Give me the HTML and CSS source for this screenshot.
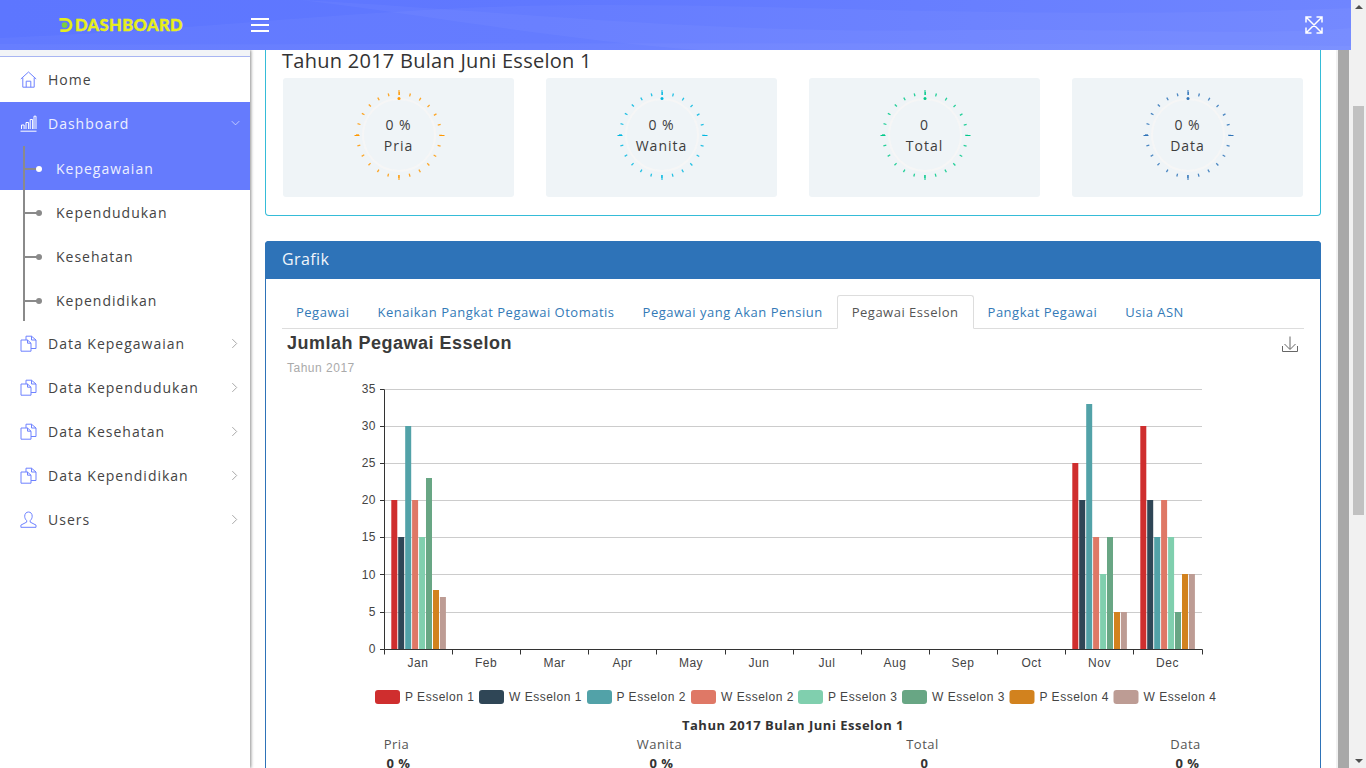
FILE: index.html
```html
<!DOCTYPE html>
<html lang="en">
<head>
    <meta charset="UTF-8">
    <meta name="viewport" content="width=device-width, initial-scale=1.0">
    <title>Dashboard Kepegawaian</title>
    <link rel="stylesheet" href="styles.css">
</head>
<body>
    <svg class="defs" width="0" height="0">
        <symbol id="i-home" viewBox="0 0 17 17"><path d="M.8 8 8.5 1l7.7 7M2.8 6.6v9.6h11.4V6.6M6.2 16.2v-6h4.6v6"/></symbol>
        <symbol id="i-bars" viewBox="0 0 17 17"><path d="M.5 16.2h16M1.5 14V10h2.6v4M6 14V7.5h2.6V14M10.2 14V4.5h2.4V14M14 14V1.2h2V14"/></symbol>
        <symbol id="i-docs" viewBox="0 0 17 17"><path d="M1 5h6.5L11 8.2v8H1zM7.5 5v3.200H11M6 5V1.200h5.500L16 5v8.500h-5M11.500 1.200V5H16"/></symbol>
        <symbol id="i-user" viewBox="0 0 17 17"><path d="M8.500 1c2.200 0 3.700 1.700 3.700 4.200 0 2-1 3.600-2 4.400v1.500l5.800 3v2.200H.9v-2.200l5.800-3V9.600c-1-.8-2-2.400-2-4.400C4.700 2.700 6.300 1 8.500 1z"/></symbol>
        <symbol id="i-right" viewBox="0 0 8 12"><path d="M1.500 1 6.500 6l-5 5"/></symbol>
        <symbol id="i-down" viewBox="0 0 12 8"><path d="M1 1.500 6 6.500l5-5"/></symbol>
        <symbol id="gauge" viewBox="0 0 100 100">
            <circle class="gauge-ring" cx="50" cy="50" r="36"/>
            <circle class="gauge-minor" cx="50" cy="50" r="41.500" stroke-dasharray="1.300 9.565" stroke-dashoffset=".65"/>
            <path class="gauge-major" d="M50 5v5M50 90v5M5.500 50.500h5M90.500 50.500h5"/>
            <circle class="gauge-dot" cx="50" cy="13.500" r="1.500"/>
        </symbol>
    </svg>

    <div class="page">
        <div class="window">
            <header class="topbar">
                <svg class="topbar-waves" viewBox="0 0 1351 50" preserveAspectRatio="none">
                    <path d="M0 38C200 30 330 12 520 6 760 0 980 22 1351 8V50H0z"/>
                    <path d="M300 0C520 12 700 34 960 30 1130 28 1260 36 1351 28V50H700C560 40 420 14 300 0z"/>
                    <path d="M0 44C300 46 700 40 1351 46V50H0z"/>
                </svg>
                <div class="brand">
                    <svg class="brand-mark" viewBox="0 0 16 16">
                        <path class="brand-arc" d="M1.500 2H8a6 6 0 0 1 0 12H2.500"/>
                        <circle class="brand-dot" cx="7" cy="8" r="3"/>
                    </svg>
                    <span class="brand-name">DASHBOARD</span>
                </div>
                <button class="menu-toggle" type="button" aria-label="Menu">
                    <span></span><span></span><span></span>
                </button>
                <svg class="fullscreen" viewBox="0 0 18 18"><path d="M1 1l16 16M17 1 1 17M1 6.500V1h5.500M11.500 1H17v5.500M1 11.500V17h5.500M11.500 17H17v-5.500"/></svg>
            </header>

            <div class="main">
                <aside class="sidebar">
                    <div class="sidebar-top"></div>
                    <nav class="side-nav">
                        <a class="nav-item"><svg class="nav-icon"><use href="#i-home"/></svg>Home</a>
                        <a class="nav-item active"><svg class="nav-icon"><use href="#i-bars"/></svg>Dashboard<svg class="nav-caret down"><use href="#i-down"/></svg></a>
                        <div class="sub-nav">
                            <a class="sub-item active">Kepegawaian</a>
                            <a class="sub-item">Kependudukan</a>
                            <a class="sub-item">Kesehatan</a>
                            <a class="sub-item">Kependidikan</a>
                        </div>
                        <a class="nav-item"><svg class="nav-icon"><use href="#i-docs"/></svg>Data Kepegawaian<svg class="nav-caret"><use href="#i-right"/></svg></a>
                        <a class="nav-item"><svg class="nav-icon"><use href="#i-docs"/></svg>Data Kependudukan<svg class="nav-caret"><use href="#i-right"/></svg></a>
                        <a class="nav-item"><svg class="nav-icon"><use href="#i-docs"/></svg>Data Kesehatan<svg class="nav-caret"><use href="#i-right"/></svg></a>
                        <a class="nav-item"><svg class="nav-icon"><use href="#i-docs"/></svg>Data Kependidikan<svg class="nav-caret"><use href="#i-right"/></svg></a>
                        <a class="nav-item"><svg class="nav-icon"><use href="#i-user"/></svg>Users<svg class="nav-caret"><use href="#i-right"/></svg></a>
                    </nav>
                </aside>

                <main class="content">
                    <section class="card card-summary">
                        <h2 class="summary-title">Tahun 2017 Bulan Juni Esselon 1</h2>
                        <div class="stat-grid">
                            <div class="stat-box">
                                <div class="gauge gauge-orange">
                                    <svg class="gauge-svg"><use href="#gauge"/></svg>
                                    <div class="gauge-text">0 %<br>Pria</div>
                                </div>
                            </div>
                            <div class="stat-box">
                                <div class="gauge gauge-cyan">
                                    <svg class="gauge-svg"><use href="#gauge"/></svg>
                                    <div class="gauge-text">0 %<br>Wanita</div>
                                </div>
                            </div>
                            <div class="stat-box">
                                <div class="gauge gauge-green">
                                    <svg class="gauge-svg"><use href="#gauge"/></svg>
                                    <div class="gauge-text">0<br>Total</div>
                                </div>
                            </div>
                            <div class="stat-box">
                                <div class="gauge gauge-blue">
                                    <svg class="gauge-svg"><use href="#gauge"/></svg>
                                    <div class="gauge-text">0 %<br>Data</div>
                                </div>
                            </div>
                        </div>
                    </section>

                    <section class="card card-chart">
                        <h3 class="card-head">Grafik</h3>
                        <div class="card-body">
                            <ul class="tabs">
                                <li class="tab">Pegawai</li>
                                <li class="tab">Kenaikan Pangkat Pegawai Otomatis</li>
                                <li class="tab">Pegawai yang Akan Pensiun</li>
                                <li class="tab active">Pegawai Esselon</li>
                                <li class="tab">Pangkat Pegawai</li>
                                <li class="tab">Usia ASN</li>
                            </ul>

                            <svg class="chart" viewBox="282 329 1022 381">
                                <text class="chart-title" x="287" y="349">Jumlah Pegawai Esselon</text>
                                <text class="chart-sub" x="287" y="372">Tahun 2017</text>
                                <path class="chart-save" d="M1290 336.500v12.500M1284.500 344l5.500 5.500 5.500-5.500M1282.500 346v5.500h15V346"/>

                                <path class="grid-line" d="M385 389.500H1202M385 426.500H1202M385 463.500H1202M385 500.500H1202M385 537.500H1202M385 574.500H1202M385 612.500H1202"/>
                                <path class="axis-line" d="M380 389.500h4.500V649.500H1202.500M380 426.500h4.500M380 463.500h4.500M380 500.500h4.500M380 537.500h4.500M380 574.500h4.500M380 612.500h4.500M380 649.500h4.500M384.500 649.500v5M452.500 649.500v5M520.500 649.500v5M588.500 649.500v5M656.500 649.500v5M725.500 649.500v5M793.500 649.500v5M861.500 649.500v5M929.500 649.500v5M997.500 649.500v5M1065.500 649.500v5M1133.500 649.500v5M1202.500 649.500v5"/>

                                <g class="axis-y">
                                    <text x="376" y="393">35</text>
                                    <text x="376" y="430">30</text>
                                    <text x="376" y="467">25</text>
                                    <text x="376" y="504">20</text>
                                    <text x="376" y="541">15</text>
                                    <text x="376" y="579">10</text>
                                    <text x="376" y="616">5</text>
                                    <text x="376" y="653">0</text>
                                </g>
                                <g class="axis-x">
                                    <text x="418" y="667">Jan</text>
                                    <text x="486" y="667">Feb</text>
                                    <text x="554.500" y="667">Mar</text>
                                    <text x="622.500" y="667">Apr</text>
                                    <text x="691" y="667">May</text>
                                    <text x="759" y="667">Jun</text>
                                    <text x="827" y="667">Jul</text>
                                    <text x="895" y="667">Aug</text>
                                    <text x="963" y="667">Sep</text>
                                    <text x="1031.500" y="667">Oct</text>
                                    <text x="1099.500" y="667">Nov</text>
                                    <text x="1167.500" y="667">Dec</text>
                                </g>

                                <g>
                                    <rect class="s1" x="391.300" y="500" width="6" height="149"/>
                                    <rect class="s2" x="398.200" y="537" width="6" height="112"/>
                                    <rect class="s3" x="405.200" y="426" width="6" height="223"/>
                                    <rect class="s4" x="412.100" y="500" width="6" height="149"/>
                                    <rect class="s5" x="419.100" y="537" width="6" height="112"/>
                                    <rect class="s6" x="426" y="478" width="6" height="171"/>
                                    <rect class="s7" x="433" y="590" width="6" height="59"/>
                                    <rect class="s8" x="439.900" y="597" width="6" height="52"/>
                                </g>
                                <g>
                                    <rect class="s1" x="1072.300" y="463" width="6" height="186"/>
                                    <rect class="s2" x="1079.200" y="500" width="6" height="149"/>
                                    <rect class="s3" x="1086.200" y="404" width="6" height="245"/>
                                    <rect class="s4" x="1093.100" y="537" width="6" height="112"/>
                                    <rect class="s5" x="1100.100" y="574" width="6" height="75"/>
                                    <rect class="s6" x="1107" y="537" width="6" height="112"/>
                                    <rect class="s7" x="1114" y="612" width="6" height="37"/>
                                    <rect class="s8" x="1120.900" y="612" width="6" height="37"/>
                                </g>
                                <g>
                                    <rect class="s1" x="1140.300" y="426" width="6" height="223"/>
                                    <rect class="s2" x="1147.200" y="500" width="6" height="149"/>
                                    <rect class="s3" x="1154.200" y="537" width="6" height="112"/>
                                    <rect class="s4" x="1161.100" y="500" width="6" height="149"/>
                                    <rect class="s5" x="1168.100" y="537" width="6" height="112"/>
                                    <rect class="s6" x="1175" y="612" width="6" height="37"/>
                                    <rect class="s7" x="1182" y="574" width="6" height="75"/>
                                    <rect class="s8" x="1188.900" y="574" width="6" height="75"/>
                                </g>

                                <g class="legend">
                                    <rect class="s1" x="375" y="690" width="25" height="14" rx="3"/><text x="405" y="701">P Esselon 1</text>
                                    <rect class="s2" x="479" y="690" width="25" height="14" rx="3"/><text x="509" y="701">W Esselon 1</text>
                                    <rect class="s3" x="587" y="690" width="25" height="14" rx="3"/><text x="616.500" y="701">P Esselon 2</text>
                                    <rect class="s4" x="691" y="690" width="25" height="14" rx="3"/><text x="721" y="701">W Esselon 2</text>
                                    <rect class="s5" x="798" y="690" width="25" height="14" rx="3"/><text x="828" y="701">P Esselon 3</text>
                                    <rect class="s6" x="902" y="690" width="25" height="14" rx="3"/><text x="932" y="701">W Esselon 3</text>
                                    <rect class="s7" x="1009.500" y="690" width="25" height="14" rx="3"/><text x="1039.500" y="701">P Esselon 4</text>
                                    <rect class="s8" x="1113.500" y="690" width="25" height="14" rx="3"/><text x="1143.500" y="701">W Esselon 4</text>
                                </g>
                            </svg>

                            <div class="recap">
                                <div class="recap-title">Tahun 2017 Bulan Juni Esselon 1</div>
                                <div class="recap-grid">
                                    <div class="recap-col"><span class="recap-label">Pria</span><b class="recap-value">0 %</b></div>
                                    <div class="recap-col"><span class="recap-label">Wanita</span><b class="recap-value">0 %</b></div>
                                    <div class="recap-col"><span class="recap-label">Total</span><b class="recap-value">0</b></div>
                                    <div class="recap-col"><span class="recap-label">Data</span><b class="recap-value">0 %</b></div>
                                </div>
                            </div>
                        </div>
                    </section>
                </main>

                <div class="inner-track"><div class="inner-thumb"></div></div>
            </div>
        </div>

        <div class="scrollbar">
            <span class="arrow-up"></span>
            <div class="scroll-thumb"></div>
            <span class="arrow-down"></span>
        </div>
    </div>
</body>
</html>
```

FILE: styles.css
```css
/* Overall page */
* {
    box-sizing: border-box;
}

body {
    margin: 0;
    font-family: 'Open Sans', sans-serif;
    font-size: 14px;
    letter-spacing: 1px;
    color: #3d3d3d;
    background: #fff;
    overflow: hidden;
}

.defs {
    position: absolute;
}

.page {
    display: flex;
    height: 100vh;
}

.window {
    flex: 1;
    min-width: 0;
    display: flex;
    flex-direction: column;
}

/* Top bar */
.topbar {
    position: relative;
    z-index: 3;
    flex: none;
    height: 50px;
    display: flex;
    align-items: center;
    background: linear-gradient(90deg, #5d76ff, #6078ff 40%, #6f85ff);
}

.topbar-waves {
    position: absolute;
    left: 0;
    top: 0;
    width: 100%;
    height: 100%;
}

.topbar-waves path {
    fill: rgba(255, 255, 255, 0.035);
}

.brand {
    position: relative;
    width: 251px;
    padding-left: 58px;
    display: flex;
    align-items: center;
    gap: 2px;
}

.brand-mark {
    width: 15px;
    height: 16px;
}

.brand-arc {
    fill: none;
    stroke: #e6ee1c;
    stroke-width: 3;
}

.brand-dot {
    fill: #7ccf3c;
}

.brand-name {
    font-family: 'Lato', sans-serif;
    font-weight: 900;
    font-size: 16.5px;
    letter-spacing: 0.4px;
    color: #e6ee1c;
    -webkit-text-stroke: 0.4px #e6ee1c;
}

.menu-toggle {
    position: relative;
    width: 18px;
    height: 14px;
    padding: 0;
    border: none;
    background: none;
    display: flex;
    flex-direction: column;
    justify-content: space-between;
}

.menu-toggle span {
    display: block;
    height: 2.4px;
    background: #fff;
}

.fullscreen {
    position: relative;
    width: 18px;
    height: 18px;
    margin-left: auto;
    margin-right: 28px;
    fill: none;
    stroke: #fff;
    stroke-width: 1.5;
}

.main {
    flex: 1;
    min-height: 0;
    display: flex;
}

/* Sidebar */
.sidebar {
    position: relative;
    z-index: 2;
    flex: none;
    width: 250px;
    background: #fff;
    box-shadow: 1px 0 3px rgba(0, 0, 0, 0.45);
}

.sidebar-top {
    height: 7px;
    background: #f2f4f7;
    border-bottom: 1px solid #a9b6f2;
    margin-bottom: 1px;
}

.nav-item {
    height: 44px;
    padding: 0 12px 2px 20px;
    display: flex;
    align-items: center;
    color: #444;
}

.nav-item.active {
    background: #657bfd;
    color: #edf0ff;
}

.nav-icon {
    flex: none;
    width: 17px;
    height: 17px;
    margin-right: 11px;
    fill: none;
    stroke: #6e82ff;
    stroke-width: 1;
}

.nav-item.active .nav-icon {
    stroke: #fff;
}

.nav-caret {
    margin-left: auto;
    width: 7px;
    height: 11px;
    fill: none;
    stroke: #9a9a9a;
    stroke-width: 1;
}

.nav-caret.down {
    width: 9px;
    height: 6px;
    margin-right: -2px;
    stroke: #dfe4ff;
}

.sub-nav {
    position: relative;
}

/* vertical tree line */
.sub-nav::before {
    content: "";
    position: absolute;
    z-index: 1;
    left: 23px;
    top: 0;
    width: 2px;
    height: 175px;
    background: #8a8a8a;
}

.sub-item {
    position: relative;
    height: 44px;
    padding-left: 56px;
    display: flex;
    align-items: center;
    color: #444;
}

.sub-item::before {
    content: "";
    position: absolute;
    left: 25px;
    top: 22px;
    width: 12px;
    height: 2px;
    background: #8a8a8a;
}

.sub-item::after {
    content: "";
    position: absolute;
    left: 36px;
    top: 20px;
    width: 6px;
    height: 6px;
    border-radius: 50%;
    background: #8a8a8a;
}

.sub-item.active {
    background: #657bfd;
    color: #edf0ff;
}

.sub-item.active::after {
    background: #fff;
}

/* Content column */
.content {
    flex: 1;
    min-width: 0;
    padding: 0 15px;
    overflow: hidden;
    background: #fff;
}

.card {
    background: #fff;
    border-radius: 4px;
}

.card-summary {
    padding: 0 17px 18px;
    border: 1px solid #35bcd8;
    border-top: 0;
    border-radius: 0 0 4px 4px;
}

.summary-title {
    margin: 0 0 6px;
    margin-left: -1px;
    font-size: 20px;
    font-weight: 400;
    line-height: 22px;
    letter-spacing: 0.27px;
    color: #333;
}

.stat-grid {
    display: grid;
    grid-template-columns: repeat(4, 1fr);
    gap: 32px;
}

.stat-box {
    height: 119px;
    padding-bottom: 5px;
    display: flex;
    align-items: center;
    justify-content: center;
    background: #eff4f7;
    border-radius: 3px;
}

.gauge {
    display: grid;
    width: 100px;
    height: 100px;
}

.gauge-svg,
.gauge-text {
    grid-area: 1 / 1;
}

.gauge-svg {
    width: 100px;
    height: 100px;
}

.gauge-text {
    align-self: center;
    text-align: center;
    line-height: 21px;
    padding-bottom: 1px;
    color: #3d3d3d;
}

.gauge-orange { color: #ff9800; }
.gauge-cyan { color: #00b7e0; }
.gauge-green { color: #00c98a; }
.gauge-blue { color: #2e73b8; }

.gauge-text {
    color: #3d3d3d;
}

.gauge-ring {
    fill: none;
    stroke: #f6f6f6;
    stroke-width: 2;
}

.gauge-minor {
    fill: none;
    stroke: currentColor;
    stroke-width: 3;
    opacity: 0.85;
}

.gauge-major {
    fill: none;
    stroke: currentColor;
    stroke-width: 1;
}

.gauge-dot {
    fill: currentColor;
}

/* Chart card */
.card-chart {
    margin-top: 25px;
    border: 1px solid #2e73b8;
    border-bottom: 0;
}

.card-head {
    margin: -1px -1px 0;
    height: 38px;
    padding-left: 17px;
    font-size: 16px;
    font-weight: 400;
    line-height: 36px;
    letter-spacing: 0.4px;
    color: #f1f5fb;
    background: #2e73b8;
    border-radius: 4px 4px 0 0;
}

.card-body {
    padding: 16px 16px 0;
}

.tabs {
    margin: 0;
    padding: 0;
    list-style: none;
    height: 34px;
    display: flex;
    border-bottom: 1px solid #ddd;
}

.tab {
    height: 34px;
    padding: 0 14px;
    font-size: 13px;
    line-height: 34px;
    letter-spacing: 0.5px;
    color: #337ab7;
}

.tab.active {
    height: 34px;
    line-height: 32px;
    color: #555;
    background: #fff;
    border: 1px solid #ddd;
    border-bottom-color: #fff;
    border-radius: 3px 3px 0 0;
}

.chart {
    display: block;
    width: 1022px;
    height: 381px;
    letter-spacing: 0;
}

.chart-title {
    font-family: 'Liberation Sans', sans-serif;
    font-size: 18px;
    font-weight: 700;
    letter-spacing: 0.5px;
    fill: #3a3a3a;
}

.chart-sub {
    font-family: 'Liberation Sans', sans-serif;
    font-size: 12px;
    letter-spacing: 0.5px;
    fill: #aaa;
}

.chart-save {
    fill: none;
    stroke: #666;
    stroke-width: 1;
}

.grid-line {
    fill: none;
    stroke: #ccc;
    stroke-width: 1;
}

.axis-line {
    fill: none;
    stroke: #333;
    stroke-width: 1;
}

.axis-y text,
.axis-x text,
.legend text {
    font-family: 'Liberation Sans', sans-serif;
    font-size: 12px;
    letter-spacing: 0.5px;
    fill: #444;
}

.axis-y text {
    text-anchor: end;
}

.axis-x text {
    text-anchor: middle;
}

.s1 { fill: #cf2e2e; }
.s2 { fill: #2f4656; }
.s3 { fill: #52a2a8; }
.s4 { fill: #df7866; }
.s5 { fill: #80cfae; }
.s6 { fill: #68a684; }
.s7 { fill: #d2821e; }
.s8 { fill: #bd9c94; }

/* Recap under the chart */
.recap {
    font-size: 13px;
    letter-spacing: 0.5px;
    text-align: center;
}

.recap-title {
    height: 25px;
    line-height: 30px;
    font-weight: 700;
    color: #333;
}

.recap-grid {
    display: grid;
    grid-template-columns: repeat(4, 1fr);
    gap: 32px;
    margin: 0 1px;
}

.recap-label {
    display: block;
    padding-right: 4px;
    line-height: 18px;
    color: #555;
}

.recap-value {
    display: block;
    line-height: 20px;
    color: #333;
}

/* Scrollbars */
.inner-track {
    flex: none;
    width: 15px;
    background: #f1f1f1;
    padding: 0 2px;
}

.inner-thumb {
    height: 100%;
    background: #a8a8a8;
}

.scrollbar {
    flex: none;
    width: 15px;
    height: 100%;
    display: flex;
    flex-direction: column;
    align-items: center;
    background: #f1f1f1;
}

.arrow-up,
.arrow-down {
    width: 0;
    height: 0;
    border-left: 4px solid transparent;
    border-right: 4px solid transparent;
}

.arrow-up {
    margin-top: 5px;
    border-bottom: 4px solid #505050;
}

.arrow-down {
    margin-top: auto;
    margin-bottom: 5px;
    border-top: 4px solid #505050;
}

.scroll-thumb {
    width: 11px;
    height: 409px;
    margin-top: 97px;
    background: #c1c1c1;
}
```
